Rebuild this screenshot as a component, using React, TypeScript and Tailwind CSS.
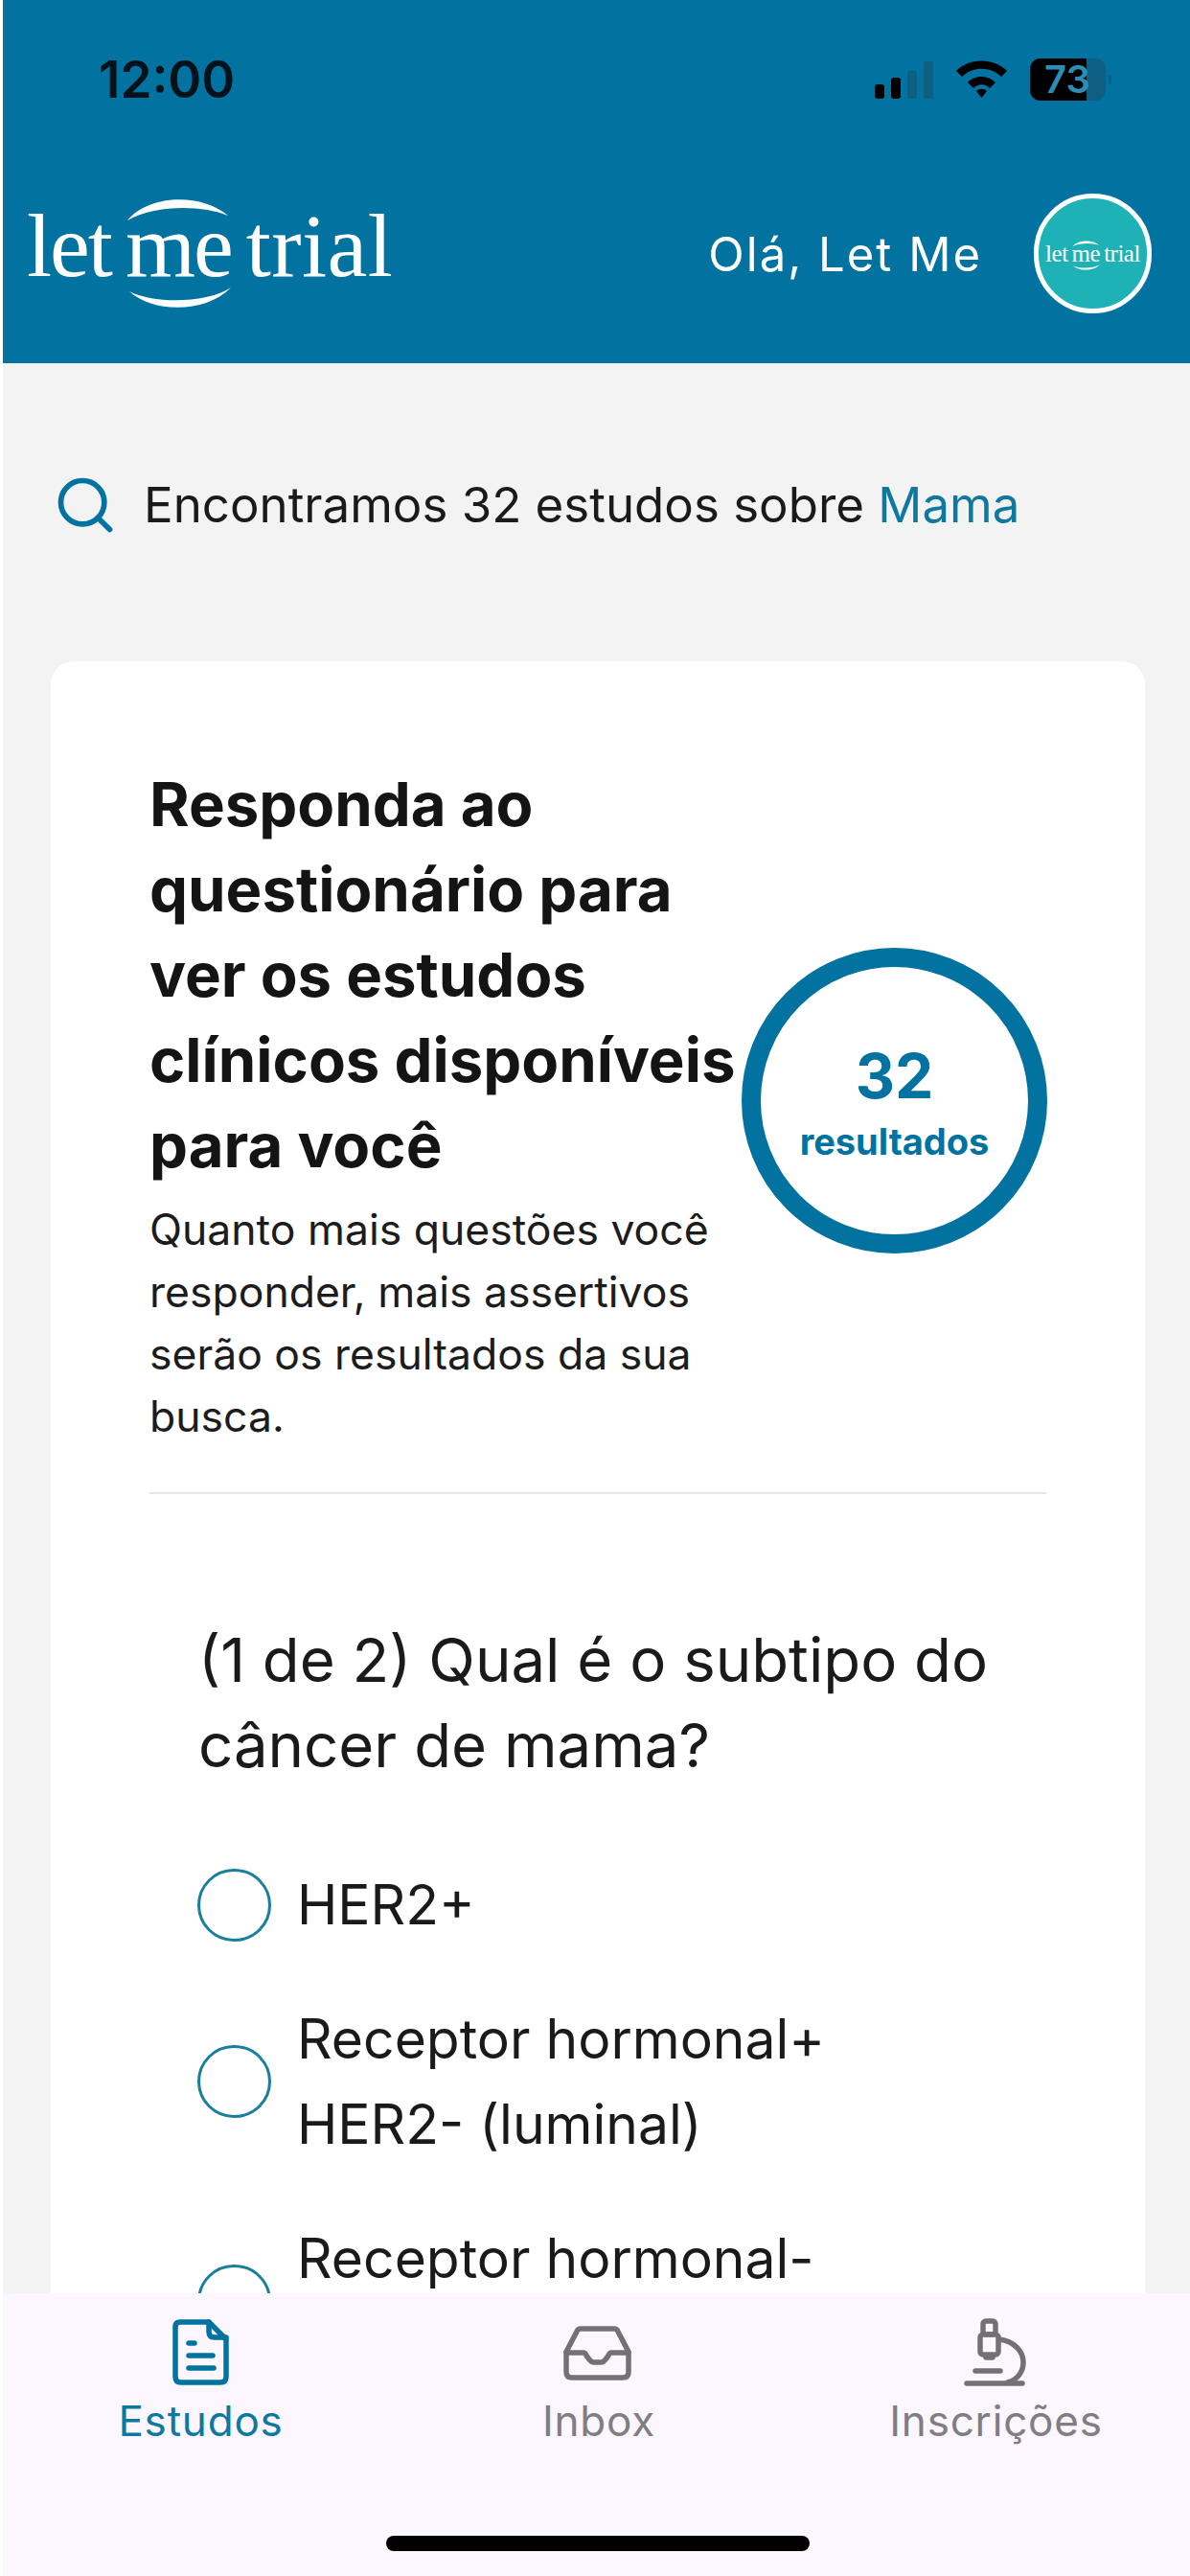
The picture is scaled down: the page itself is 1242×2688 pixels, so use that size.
import { Search } from 'lucide-react';

const inter = "font-['Inter',sans-serif]";

function StatusBar() {
  return (
    <div className="flex h-[104px] items-start justify-between pl-[100px] pr-[82px] pt-[57px]">
      <span className="text-[53px] font-semibold leading-[52px] text-[#04121c]">12:00</span>
      <div className="mt-[4px] flex h-[44px] items-center gap-[24px]">
        <div className="flex h-[39px] items-end gap-[7px]">
          <div className="h-[15px] w-[10px] rounded-[3px] bg-black" />
          <div className="h-[22px] w-[10px] rounded-[3px] bg-black" />
          <div className="h-[29px] w-[10px] rounded-[3px] bg-[#0f5f82]" />
          <div className="h-[39px] w-[10px] rounded-[3px] bg-[#0f5f82]" />
        </div>
        <svg width="53" height="40" viewBox="0 0 53 40" fill="#000">
          <path d="M0 11 C14 -3 39 -3 53 11 L47 17 C36 6 17 6 6 17 Z" />
          <path d="M12 23 C20 15 33 15 41 23 L35 29 C30 24 23 24 18 29 Z" />
          <path d="M21 32 C24 29 29 29 32 32 L26.5 39 Z" />
        </svg>
        <div className="relative h-[44px] w-[85px]">
          <div className="absolute inset-y-0 left-0 w-[79px] overflow-hidden rounded-[11px] bg-[#0f5f82]">
            <div className="h-full w-[59px] bg-black" />
          </div>
          <div className="absolute right-0 top-[17px] h-[10px] w-[3px] rounded-r-[3px] bg-[#0f5f82]" />
          <span className="absolute left-[15px] top-0 text-[40px] font-semibold leading-[44px] text-[#2f8db4]">73</span>
        </div>
      </div>
    </div>
  );
}

function LogoSmall() {
  return (
    <div className="relative flex gap-[4px] font-['Liberation_Serif',serif] text-[25px] leading-[25px] tracking-[-0.5px] text-white whitespace-nowrap">
      <span>let</span>
      <span>me</span>
      <span>trial</span>
      <svg className="absolute left-[-2px] top-[-5px]" width="107" height="40" viewBox="0 0 400 150" fill="#fff">
        <path d="M113 39 C135 12 190 10 218 34 C190 22 140 23 113 39 Z" />
        <path d="M115 113 C140 136 195 136 221 109 C195 126 140 126 115 113 Z" />
      </svg>
    </div>
  );
}

function Logo() {
  return (
    <div className="relative mb-[18px] flex h-[94px] gap-[15px] font-['Liberation_Serif',serif] text-[94px] leading-[94px] text-white whitespace-nowrap">
      <span className="tracking-[-2px]">let</span>
      <span className="tracking-[-2px]">me</span>
      <span className="tracking-[0.4px]">trial</span>
      <svg className="absolute left-[-8px] top-[-18px]" width="400" height="150" viewBox="0 0 400 150" fill="#fff">
        <path d="M113 39 C135 12 190 10 218 34 C190 22 140 23 113 39 Z" />
        <path d="M115 113 C140 136 195 136 221 109 C195 126 140 126 115 113 Z" />
      </svg>
    </div>
  );
}

function Header() {
  return (
    <header className="flex h-[379px] flex-col bg-[#0272a0]">
      <StatusBar />
      <div className="flex items-center justify-between pl-[25px] pr-[40px] pt-[98px]">
        <Logo />
        <div className="flex items-center gap-[54px]">
          <span className="pt-[2px] text-[49px] leading-[56px] tracking-[2px] text-white">Olá, Let Me</span>
          <div className="flex h-[125px] w-[123px] items-center justify-center rounded-full border-[5px] border-white bg-[#1eb2b6]">
            <LogoSmall />
          </div>
        </div>
      </div>
    </header>
  );
}

function Radio() {
  return <div className="h-[76px] w-[77px] shrink-0 rounded-full border-[3px] border-[#1a7f9e] bg-white" />;
}

function Option({ lines }: { lines: string[] }) {
  return (
    <div className="flex items-center gap-[27px]">
      <Radio />
      <p className="min-h-[89px] text-[57px] leading-[89px] text-[#1a1a1a]">
        {lines.map((line, i) => (
          <span key={i} className="block whitespace-nowrap">{line}</span>
        ))}
      </p>
    </div>
  );
}

function Card() {
  return (
    <section className="ml-[50px] mr-[47px] mt-[129px] rounded-[24px] bg-white px-[103px] pt-[104px]">
      <div className="flex items-center justify-between border-b-2 border-[#e2e8f0] pb-[46px]">
        <div className="w-[618px] shrink-0">
          <h2 className="whitespace-nowrap text-[63.5px] font-bold leading-[89px] text-[#141414]">
            Responda ao
            <br />
            questionário para
            <br />
            ver os estudos
            <br />
            clínicos disponíveis
            <br />
            para você
          </h2>
          <p className="mt-[12px] whitespace-nowrap text-[44.5px] leading-[65px] text-[#1c1c1c]">
            Quanto mais questões você
            <br />
            responder, mais assertivos
            <br />
            serão os resultados da sua
            <br />
            busca.
          </p>
        </div>
        <div className="mb-[9px] flex h-[319px] w-[319px] shrink-0 flex-col items-center justify-center rounded-full border-[20px] border-[#0272a0] pt-[4px] text-[#0272a0]">
          <span className="text-[64px] font-bold leading-[76px]">32</span>
          <span className="mt-[6px] text-[38px] font-bold leading-[48px]">resultados</span>
        </div>
      </div>
      <div className="pl-[51px] pt-[128px]">
        <h3 className="whitespace-nowrap text-[63.5px] leading-[89px] text-[#1a1a1a]">
          (1 de 2) Qual é o subtipo do
          <br />
          câncer de mama?
        </h3>
        <div className="-ml-[1px] mt-[78px] flex flex-col gap-[51px]">
          <Option lines={['HER2+']} />
          <Option lines={['Receptor hormonal+', 'HER2- (luminal)']} />
          <Option lines={['Receptor hormonal-', '\u00a0']} />
        </div>
      </div>
    </section>
  );
}

function TabBar() {
  return (
    <nav className="relative h-[295px] shrink-0 bg-[#fcf6fe]">
      <div className="grid grid-cols-3 pt-[12px] text-center text-[44px] leading-[56px] tracking-[0.8px]">
        <div className="flex flex-col items-center text-[#0e79a0]">
          <svg width="100" height="100" viewBox="0 0 100 100" fill="none" stroke="#0272a0" strokeWidth="5.5" strokeLinejoin="round" strokeLinecap="round">
            <path d="M28 18 H58 L76 36 V75 Q76 81 70 81 H29 Q23 81 23 75 V23 Q23 18 28 18 Z" />
            <path d="M58 18 V28 Q58 34 64 34 H76" />
            <path d="M37 40 H43" />
            <path d="M37 53 H62" />
            <path d="M37 66 H63" />
          </svg>
          <span className="-mt-[7px]">Estudos</span>
        </div>
        <div className="flex flex-col items-center pl-[5px] text-[#807d83]">
          <svg width="100" height="100" viewBox="0 0 100 100" fill="none" stroke="#747176" strokeWidth="5.5" strokeLinejoin="round" strokeLinecap="round">
            <path d="M31 25 H66 Q69 25 70 28 L81 49 V70 Q81 76 75 76 H22 Q16 76 16 70 V49 L27 28 Q28 25 31 25 Z" />
            <path d="M16 50 H34 Q36 50 37 53 L40 57 Q42 60 45 60 H52 Q55 60 57 57 L60 53 Q61 50 63 50 H81" />
          </svg>
          <span className="-mt-[7px]">Inbox</span>
        </div>
        <div className="flex flex-col items-center pl-[8px] text-[#807d83]">
          <svg width="100" height="100" viewBox="0 0 100 100" fill="none" stroke="#747176" strokeWidth="5.5" strokeLinejoin="round" strokeLinecap="round">
            <path d="M19 82 H77" />
            <path d="M28 69 H54" />
            <rect x="36" y="17" width="13" height="14" rx="3" />
            <rect x="33" y="31" width="19" height="21" rx="3" />
            <path d="M39 55 H46" />
            <path d="M53 36 C68 38 78 48 78 60 C78 70 72 78 62 81" />
          </svg>
          <span className="-mt-[7px]">Inscrições</span>
        </div>
      </div>
      <div className="absolute bottom-[26px] left-[400px] h-[16px] w-[442px] rounded-full bg-black" />
    </nav>
  );
}

export default function App() {
  return (
    <div className={`flex h-[2688px] w-[1242px] flex-col overflow-hidden bg-white pl-[3px] ${inter}`}>
      <Header />
      <main className="flex-1 overflow-hidden bg-[#f2f3f2]">
        <div className="flex items-center gap-[27px] pl-[52px] pt-[114px]">
          <Search className="h-[68px] w-[68px] text-[#0272a0]" strokeWidth={2} />
          <p className="text-[51px] leading-[64px] text-[#1a1a1a]">
            Encontramos 32 estudos sobre <span className="text-[#0e79a0]">Mama</span>
          </p>
        </div>
        <Card />
      </main>
      <TabBar />
    </div>
  );
}
